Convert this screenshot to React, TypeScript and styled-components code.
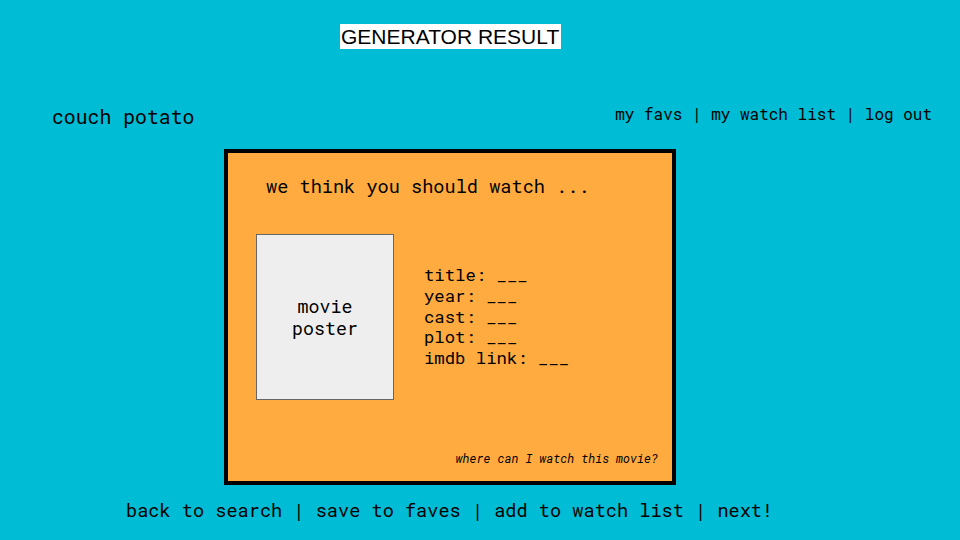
import React from "react";
import styled, { createGlobalStyle } from "styled-components";

const Global = createGlobalStyle`
  html, body { margin: 0; padding: 0; }
  body { background: #00bcd4; width: 960px; height: 540px; overflow: hidden; }
`;

const mono = `"Roboto Mono", "DejaVu Sans Mono", "Liberation Mono", monospace`;

const Page = styled.div`
  width: 960px;
  height: 540px;
  background: #00bcd4;
  display: flex;
  flex-direction: column;
  color: #000;
  font-family: ${mono};
`;

const TitleRow = styled.div`
  padding: 24px 0 0 340px;
  display: flex;
`;

const TitleBox = styled.div`
  background: #ffffff;
  font-family: "Liberation Sans", Arial, sans-serif;
  font-size: 21px;
  line-height: 25px;
  height: 25px;
  padding: 0 0 0 1px;
  width: 220px;
  white-space: nowrap;
`;

const NavRow = styled.div`
  margin-top: 55px;
  height: 24px;
  display: flex;
  align-items: center;
  justify-content: space-between;
  padding: 0 28px 0 52px;
`;

const Brand = styled.div`
  font-size: 19.8px;
  line-height: 24px;
  white-space: pre;
`;

const TopLinks = styled.div`
  font-size: 16px;
  line-height: 20px;
  margin-bottom: 4px;
  white-space: pre;
`;

const CardRow = styled.div`
  margin-top: 21px;
  padding-left: 224px;
  display: flex;
`;

const Card = styled.div`
  box-sizing: border-box;
  width: 452px;
  height: 336px;
  background: #ffab40;
  border: 4px solid #000;
  display: flex;
  flex-direction: column;
  padding: 22px 14px 15px 28px;
`;

const Heading = styled.div`
  font-size: 18.6px;
  line-height: 22px;
  padding-left: 10px;
  white-space: pre;
`;

const Body = styled.div`
  margin-top: 37px;
  display: flex;
  align-items: center;
  gap: 30px;
`;

const Poster = styled.div`
  box-sizing: border-box;
  width: 138px;
  height: 166px;
  background: #eeeeee;
  border: 1px solid #666666;
  display: flex;
  align-items: center;
  justify-content: center;
  text-align: center;
  font-size: 18.3px;
  line-height: 22px;
`;

const Info = styled.div`
  font-size: 17.3px;
  line-height: 20.8px;
  white-space: pre;
`;

const Note = styled.div`
  margin-top: auto;
  align-self: flex-end;
  font-size: 11.9px;
  line-height: 14px;
  font-style: italic;
  white-space: pre;
`;

const BottomNav = styled.div`
  margin-top: 14px;
  padding-left: 126px;
  font-size: 18.6px;
  line-height: 22px;
  white-space: pre;
`;

export default function App() {
  return (
    <Page>
      <Global />
      <TitleRow>
        <TitleBox>GENERATOR RESULT</TitleBox>
      </TitleRow>
      <NavRow>
        <Brand>couch potato</Brand>
        <TopLinks>my favs | my watch list | log out</TopLinks>
      </NavRow>
      <CardRow>
        <Card>
          <Heading>we think you should watch ...</Heading>
          <Body>
            <Poster>
              movie
              <br />
              poster
            </Poster>
            <Info>
              {"title: ___\nyear: ___\ncast: ___\nplot: ___\nimdb link: ___"}
            </Info>
          </Body>
          <Note>where can I watch this movie?</Note>
        </Card>
      </CardRow>
      <BottomNav>back to search | save to faves | add to watch list | next!</BottomNav>
    </Page>
  );
}
